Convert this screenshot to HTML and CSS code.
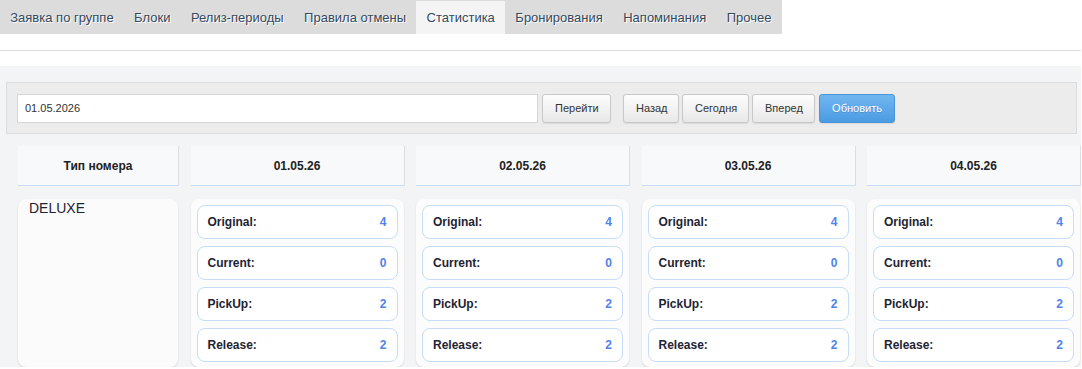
FILE: index.html
```html
<!DOCTYPE html>
<html lang="ru">
<head>
<meta charset="utf-8">
<title>Статистика</title>
<link rel="stylesheet" href="styles.css">
</head>
<body>
<nav class="tabs">
  <a class="tab">Заявка по группе</a>
  <a class="tab">Блоки</a>
  <a class="tab">Релиз-периоды</a>
  <a class="tab">Правила отмены</a>
  <a class="tab active">Статистика</a>
  <a class="tab">Бронирования</a>
  <a class="tab">Напоминания</a>
  <a class="tab">Прочее</a>
</nav>
<hr class="sep">
<section class="panel">
  <div class="toolbar">
    <input class="date-input" type="text" value="01.05.2026">
    <button class="btn">Перейти</button>
    <div class="nav-group">
      <button class="btn btn-nav">Назад</button>
      <button class="btn btn-nav">Сегодня</button>
      <button class="btn btn-nav">Вперед</button>
    </div>
    <button class="btn btn-primary">Обновить</button>
  </div>
  <div class="grid">
    <div class="head">Тип номера</div>
    <div class="head">01.05.26</div>
    <div class="head">02.05.26</div>
    <div class="head">03.05.26</div>
    <div class="head">04.05.26</div>

    <div class="room">DELUXE</div>
    <div class="day">
      <div class="stat"><span>Original:</span><b>4</b></div>
      <div class="stat"><span>Current:</span><b>0</b></div>
      <div class="stat"><span>PickUp:</span><b>2</b></div>
      <div class="stat"><span>Release:</span><b>2</b></div>
    </div>
    <div class="day">
      <div class="stat"><span>Original:</span><b>4</b></div>
      <div class="stat"><span>Current:</span><b>0</b></div>
      <div class="stat"><span>PickUp:</span><b>2</b></div>
      <div class="stat"><span>Release:</span><b>2</b></div>
    </div>
    <div class="day">
      <div class="stat"><span>Original:</span><b>4</b></div>
      <div class="stat"><span>Current:</span><b>0</b></div>
      <div class="stat"><span>PickUp:</span><b>2</b></div>
      <div class="stat"><span>Release:</span><b>2</b></div>
    </div>
    <div class="day">
      <div class="stat"><span>Original:</span><b>4</b></div>
      <div class="stat"><span>Current:</span><b>0</b></div>
      <div class="stat"><span>PickUp:</span><b>2</b></div>
      <div class="stat"><span>Release:</span><b>2</b></div>
    </div>
  </div>
</section>
</body>
</html>
```
FILE: styles.css
```css
* { box-sizing: border-box; }
html, body { margin: 0; padding: 0; background: #fff; }
body {
  font-family: "Liberation Sans", Arial, sans-serif;
  color: #222;
  width: 1081px;
  overflow: hidden;
}
.tabs {
  display: inline-flex;
  background: #dcdcdc;
  height: 34px;
}
.tab {
  display: flex;
  align-items: center;
  padding: 0 10.25px;
  font-size: 13px;
  color: #34495e;
  text-shadow: 1px 1px 0 #fff;
  margin-top: 1px;
}
.tab.active { background: #f4f4f4; }
.sep {
  border: 0;
  border-top: 1px solid #dedede;
  margin: 16px 0 0;
  height: 0;
}
.panel {
  margin-top: 15px;
  background: #f3f4f6;
  padding: 16px 0 0 6px;
}
.toolbar {
  display: flex;
  align-items: center;
  gap: 4px;
  background: #ececec;
  border: 1px solid #dcdcdc;
  padding: 10px 10px;
  width: 1071px;
  height: 52px;
}
.date-input {
  width: 521px;
  height: 29px;
  border: 1px solid #d6d6d6;
  background: #fff;
  padding: 0 7px;
  font-family: inherit;
  font-size: 11px;
  color: #333;
  outline: none;
}
.btn {
  height: 29px;
  padding: 0 12px;
  font-family: inherit;
  font-size: 11px;
  color: #333;
  background: linear-gradient(#fdfdfd, #e8e8e8);
  border: 1px solid #c8c8c8;
  border-radius: 3px;
  box-shadow: 0 1px 1px rgba(0,0,0,0.08);
}
.btn:first-of-type { width: 69px; }
.nav-group { display: flex; gap: 3px; margin-left: 8px; }
.btn-nav:nth-child(1) { width: 56px; }
.btn-nav:nth-child(2) { width: 67px; }
.btn-nav:nth-child(3) { width: 63px; }
.btn-primary {
  width: 76px;
  color: #fff;
  background: linear-gradient(#71b6f0, #4b9be3);
  border-color: #4a94d8;
  text-shadow: 0 1px 0 rgba(0,0,0,0.15);
}
.grid {
  display: grid;
  grid-template-columns: 160px repeat(4, 213px);
  column-gap: 12.5px;
  row-gap: 13px;
  padding: 12px 0 0 12px;
}
.head {
  height: 40px;
  background: #f8f9fb;
  border-bottom: 1px solid #c9ddf7;
  box-shadow: 1px 0 0 #dcdde0;
  display: flex;
  align-items: center;
  justify-content: center;
  font-size: 12px;
  font-weight: bold;
  color: #222;
}
.room {
  background: #fbfbfb;
  border-radius: 8px;
  box-shadow: 0 1px 2px rgba(0,0,0,0.12);
  padding: 1px 11px;
  font-size: 14px;
  color: #1e2330;
}
.day {
  background: #fcfcfc;
  border-radius: 8px;
  box-shadow: 0 1px 2px rgba(0,0,0,0.12);
  padding: 6px 6px 5px;
  display: flex;
  flex-direction: column;
  gap: 7px;
}
.stat {
  height: 34px;
  background: #fff;
  border: 1px solid #c6dcf8;
  border-radius: 8px;
  display: flex;
  align-items: center;
  justify-content: space-between;
  padding: 0 10px;
  font-size: 12px;
  font-weight: bold;
  color: #1e2433;
}
.stat b { color: #4f84ea; }
```
